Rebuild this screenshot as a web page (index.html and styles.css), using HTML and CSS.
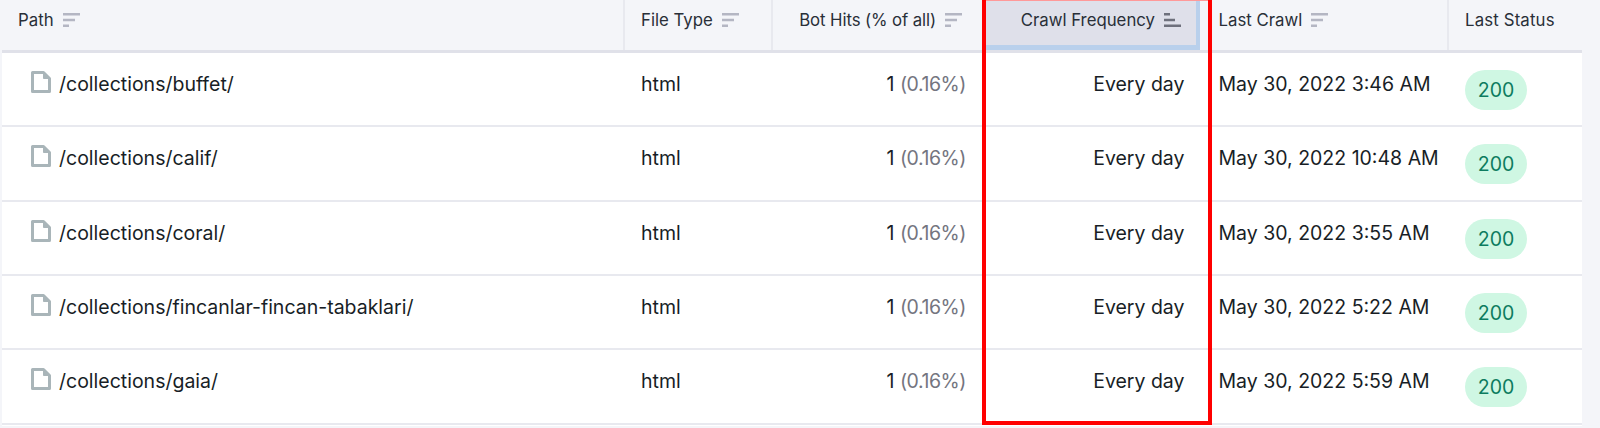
FILE: index.html
```html
<!DOCTYPE html>
<html lang="en">
<head>
<meta charset="utf-8">
<title>Crawl table</title>
<link rel="stylesheet" href="styles.css">
</head>
<body>
<svg class="defs" width="0" height="0">
  <symbol id="sort" viewBox="0 0 17 14"><path d="M0 1.200h17M0 7h12M0 12.800h6" fill="none" stroke="currentColor" stroke-width="2.400"/></symbol>
  <symbol id="sort-active" viewBox="0 0 17 14"><path d="M0 1.200h6M0 7h11M0 12.800h17" fill="none" stroke="currentColor" stroke-width="2.400"/></symbol>
  <symbol id="file" viewBox="0 0 20 22"><path d="M1.500 1.500h11l6 6v13h-17z" fill="#fff" stroke="#a9b5b9" stroke-width="3" stroke-linejoin="round"/><path d="M12.500 1.500l6 6h-6z" fill="#a9b5b9" stroke="#a9b5b9" stroke-width="1" stroke-linejoin="round"/></symbol>
</svg>
<div class="page">
  <div class="table">
    <div class="head">
      <div class="th c-path">Path <svg class="sort"><use href="#sort"/></svg></div>
      <div class="th c-type sep">File Type <svg class="sort"><use href="#sort"/></svg></div>
      <div class="th c-hits sep right">Bot Hits (% of all) <svg class="sort"><use href="#sort"/></svg></div>
      <div class="th c-freq right active">Crawl Frequency <svg class="sort dark"><use href="#sort-active"/></svg></div>
      <div class="th c-last">Last Crawl <svg class="sort"><use href="#sort"/></svg></div>
      <div class="th c-status sep">Last Status</div>
    </div>
    <div class="row">
      <div class="td c-path"><svg class="file"><use href="#file"/></svg>/collections/buffet/</div>
      <div class="td c-type">html</div>
      <div class="td c-hits right">1&nbsp;<span class="pct">(0.16%)</span></div>
      <div class="td c-freq right">Every day</div>
      <div class="td c-last">May 30, 2022 3:46 AM</div>
      <div class="td c-status"><span class="badge">200</span></div>
    </div>
    <div class="row">
      <div class="td c-path"><svg class="file"><use href="#file"/></svg>/collections/calif/</div>
      <div class="td c-type">html</div>
      <div class="td c-hits right">1&nbsp;<span class="pct">(0.16%)</span></div>
      <div class="td c-freq right">Every day</div>
      <div class="td c-last">May 30, 2022 10:48 AM</div>
      <div class="td c-status"><span class="badge">200</span></div>
    </div>
    <div class="row">
      <div class="td c-path"><svg class="file"><use href="#file"/></svg>/collections/coral/</div>
      <div class="td c-type">html</div>
      <div class="td c-hits right">1&nbsp;<span class="pct">(0.16%)</span></div>
      <div class="td c-freq right">Every day</div>
      <div class="td c-last">May 30, 2022 3:55 AM</div>
      <div class="td c-status"><span class="badge">200</span></div>
    </div>
    <div class="row">
      <div class="td c-path"><svg class="file"><use href="#file"/></svg>/collections/fincanlar-fincan-tabaklari/</div>
      <div class="td c-type">html</div>
      <div class="td c-hits right">1&nbsp;<span class="pct">(0.16%)</span></div>
      <div class="td c-freq right">Every day</div>
      <div class="td c-last">May 30, 2022 5:22 AM</div>
      <div class="td c-status"><span class="badge">200</span></div>
    </div>
    <div class="row">
      <div class="td c-path"><svg class="file"><use href="#file"/></svg>/collections/gaia/</div>
      <div class="td c-type">html</div>
      <div class="td c-hits right">1&nbsp;<span class="pct">(0.16%)</span></div>
      <div class="td c-freq right">Every day</div>
      <div class="td c-last">May 30, 2022 5:59 AM</div>
      <div class="td c-status"><span class="badge">200</span></div>
    </div>
  </div>
  <div class="highlight"></div>
</div>
</body>
</html>
```
FILE: styles.css
```css
* { box-sizing: border-box; }
html, body { margin: 0; height: 100%; overflow: hidden; }
body {
  background: #f4f5f9;
  font-family: Inter, "Liberation Sans", sans-serif;
  font-size: 19.500px;
  color: #181e26;
}
.defs { position: absolute; }
.page { position: relative; height: 428px; padding-left: 2px; }
.table { width: 1580px; background: #fff; height: 426px; }
.head, .row {
  display: grid;
  grid-template-columns: 621px 148px 214px 215px 247px 135px;
}
.head { height: 53px; background: #f4f5f9; border-bottom: 3px solid #e0e1e9; font-size: 16.800px; color: #292f38; }
.row { height: 74.330px; border-bottom: 2px solid #e8e9ef; }
.th { display: flex; align-items: center; gap: 9px; height: 50px; padding: 0 17px 10px 16px; white-space: nowrap; }
.sep { border-left: 2px solid #e8e9ef; }
.th.right { justify-content: flex-end; padding-right: 23px; }
.th.c-hits { letter-spacing: -0.100px; }
.th.c-status { letter-spacing: 0.150px; }
.th.c-last { padding-left: 18.500px; }
.th.active {
  background: #dfe0ea;
  border-right: 4px solid #b9d0ec;
  border-bottom: 5px solid #b9d0ec;
  padding-right: 15px;
  padding-bottom: 5px;
}
.sort { width: 17px; height: 14px; color: #b4b6c3; flex: none; }
.sort.dark { color: #6e707c; }
.td { padding: 21px 17px 0 18.500px; line-height: 20px; white-space: nowrap; }
.td.c-type { padding-left: 18px; }
.td.c-path { display: flex; align-items: flex-start; padding-left: 29px; }
.td.right { text-align: right; padding-right: 19px; }
.td.c-freq { padding-right: 15.500px; }
.td.c-status { display: flex; align-items: flex-start; padding-top: 17px; padding-left: 18px; }
.file { width: 20px; height: 22px; margin: -3px 8px 0 0; flex: none; }
.pct { color: #74757f; letter-spacing: -0.440px; }
.badge {
  width: 62px;
  height: 40px;
  line-height: 40px;
  border-radius: 20px;
  background: #cff7e3;
  color: #0d7c5f;
  text-align: center;
}
.highlight {
  position: absolute;
  left: 982px;
  top: -4px;
  width: 230px;
  height: 429px;
  border: 4px solid #f00;
  box-shadow: inset 0 1px 0 #f99;
  pointer-events: none;
}
```
